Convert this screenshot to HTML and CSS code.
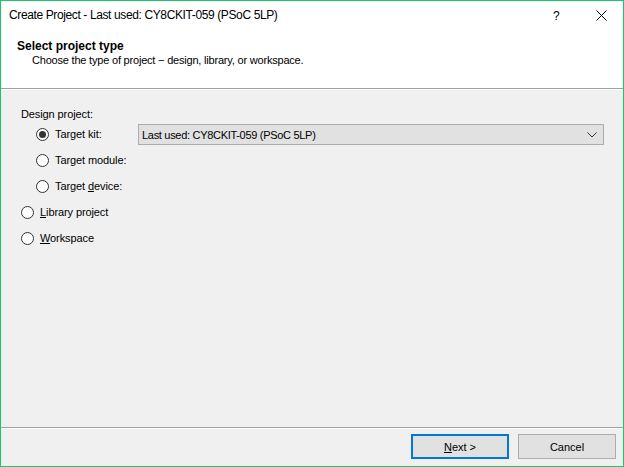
FILE: index.html
```html
<!DOCTYPE html>
<html>
<head>
<meta charset="utf-8">
<link rel="stylesheet" href="styles.css">
</head>
<body>
<div class="window">
  <div class="titlebar">
    <span class="title">Create Project - Last used: CY8CKIT-059 (PSoC 5LP)</span>
    <span class="help">?</span>
    <span class="close">
      <svg width="11" height="11" viewBox="0 0 11 11"><path d="M0.5 0.5 L10.5 10.5 M10.5 0.5 L0.5 10.5" stroke="#000" stroke-width="1" fill="none"/></svg>
    </span>
  </div>
  <div class="header">
    <div class="h-title">Select project type</div>
    <div class="h-sub">Choose the type of project &#8722; design, library, or workspace.</div>
  </div>
  <div class="body">
    <div class="group-label">Design project:</div>
    <div class="row nested">
      <span class="radio checked"></span>
      <span class="label label-kit">Target kit:</span>
      <div class="combo">
        <span class="combo-text">Last used: CY8CKIT-059 (PSoC 5LP)</span>
        <svg class="chev" width="10" height="6" viewBox="0 0 10 6"><path d="M0.5 0.5 L5 5 L9.5 0.5" stroke="#333" stroke-width="1" fill="none"/></svg>
      </div>
    </div>
    <div class="row nested">
      <span class="radio"></span>
      <span class="label">Target module:</span>
    </div>
    <div class="row nested">
      <span class="radio"></span>
      <span class="label">Target <u>d</u>evice:</span>
    </div>
    <div class="row">
      <span class="radio"></span>
      <span class="label"><u>L</u>ibrary project</span>
    </div>
    <div class="row">
      <span class="radio"></span>
      <span class="label"><u>W</u>orkspace</span>
    </div>
  </div>
  <div class="footer">
    <button class="btn default"><u>N</u>ext &gt;</button>
    <button class="btn">Cancel</button>
  </div>
</div>
</body>
</html>
```
FILE: styles.css
```css
html, body {
  margin: 0;
  padding: 0;
  background: #f0f0f0;
}
.window {
  box-sizing: border-box;
  width: 624px;
  height: 467px;
  border: 1px solid #1cc769;
  display: flex;
  flex-direction: column;
  background: #f0f0f0;
  font-family: "Liberation Sans", Arial, sans-serif;
  font-size: 11px;
  color: #000;
}
.titlebar {
  height: 29px;
  background: #fff;
  display: flex;
  align-items: center;
  padding-left: 8px;
}
.title {
  font-family: "Liberation Sans", Arial, sans-serif;
  font-size: 12px;
  letter-spacing: -0.38px;
  flex: 1;
  padding-bottom: 1px;
}
.help {
  font-size: 12px;
  width: 12px;
  margin-right: 31px;
}
.close {
  width: 11px;
  height: 11px;
  margin-right: 16px;
  display: flex;
}
.header {
  background: #fff;
  height: 59px;
  border-bottom: 1px solid #a0a0a0;
  box-sizing: border-box;
  padding-top: 10px;
}
.h-title {
  font-weight: bold;
  font-size: 12px;
  padding-left: 16px;
  line-height: 13px;
}
.h-sub {
  padding-left: 31px;
  line-height: 15px;
  letter-spacing: -0.2px;
}
.body {
  flex: 1;
  border-top: 1px solid #fff;
  padding-top: 18px;
  padding-left: 20px;
  display: flex;
  flex-direction: column;
  letter-spacing: -0.1px;
}
.group-label {
  line-height: 13px;
}
.row {
  height: 26px;
  display: flex;
  align-items: center;
  padding-left: 0;
}
.row.nested {
  padding-left: 15px;
}
.radio {
  box-sizing: border-box;
  width: 13px;
  height: 13px;
  border-radius: 50%;
  border: 1px solid #333;
  background: #fff;
  display: flex;
  align-items: center;
  justify-content: center;
  flex: none;
}
.radio.checked::after {
  content: "";
  width: 7px;
  height: 7px;
  border-radius: 50%;
  background: #333;
}
.label {
  margin-left: 6px;
}
.label-kit {
  width: 83px;
}
.combo {
  box-sizing: border-box;
  width: 466px;
  height: 21px;
  border: 1px solid #adadad;
  background: #e1e1e1;
  display: flex;
  align-items: center;
  padding-left: 3px;
  padding-right: 6px;
  margin-top: 1px;
  letter-spacing: -0.3px;
}
.combo-text {
  flex: 1;
}
.footer {
  height: 39px;
  border-top: 1px solid #a0a0a0;
  box-shadow: inset 0 1px 0 #fff;
  display: flex;
  justify-content: flex-end;
  align-items: flex-start;
  padding-top: 6px;
  padding-right: 7px;
  gap: 9px;
  box-sizing: border-box;
}
.btn {
  box-sizing: border-box;
  width: 98px;
  height: 25px;
  border: 1px solid #adadad;
  background: #e1e1e1;
  font-family: "Liberation Sans", Arial, sans-serif;
  font-size: 11px;
  color: #000;
  padding: 0;
}
.btn.default {
  border: 2px solid #0078d7;
}
```
